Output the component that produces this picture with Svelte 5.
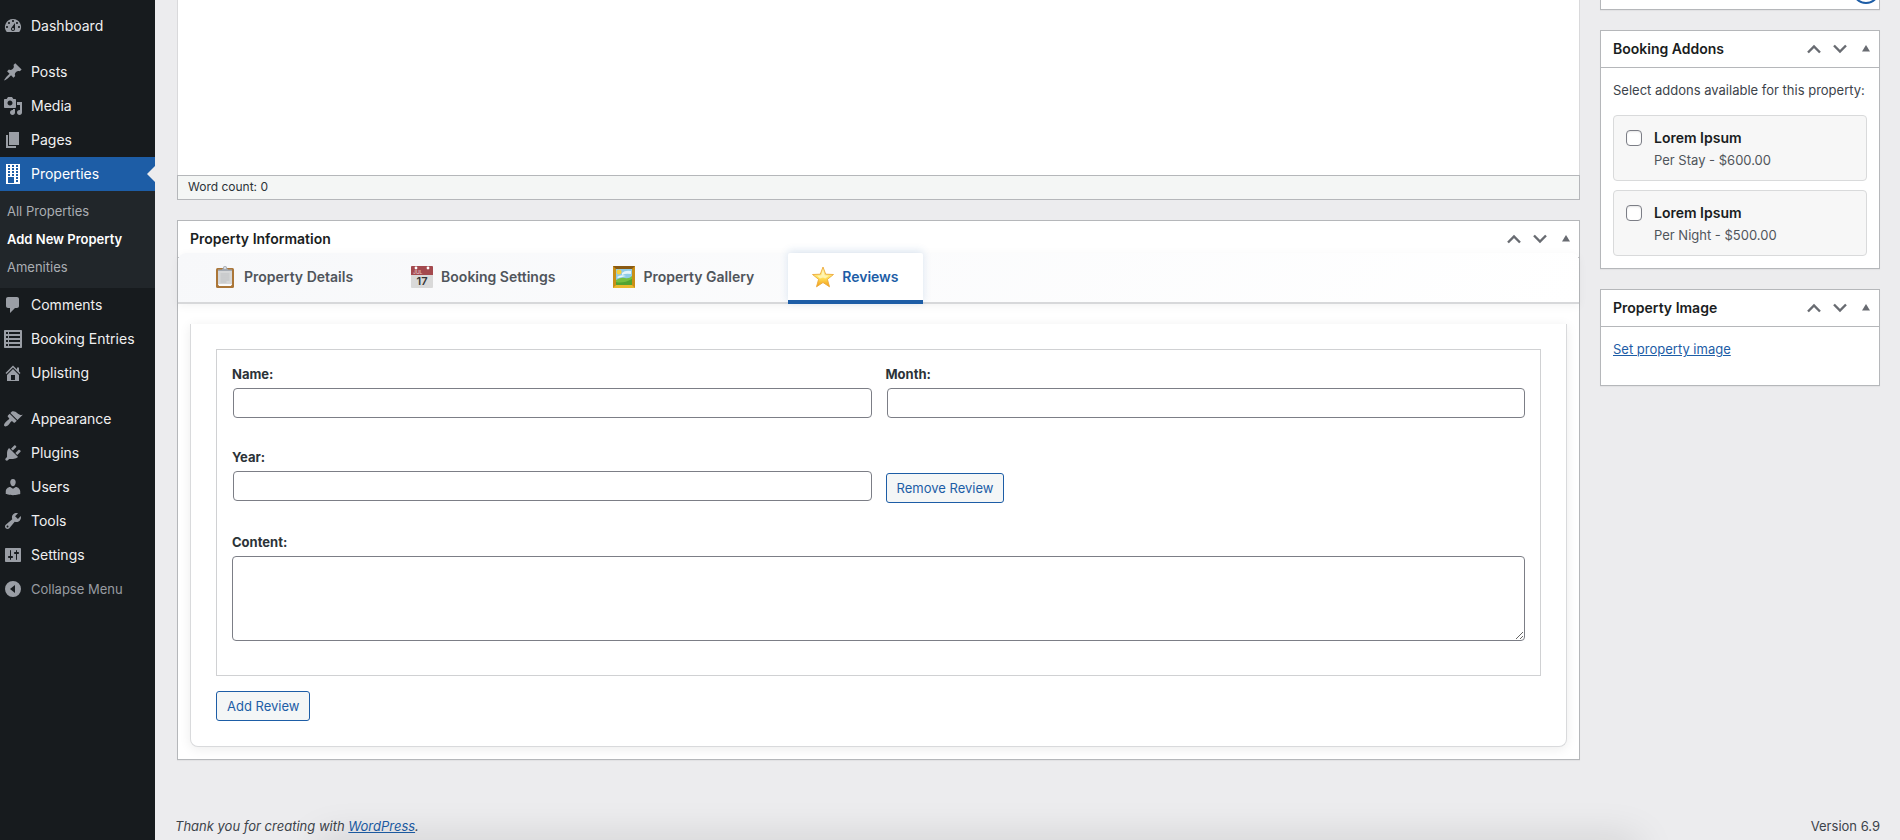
<script>
    const icons = {
        dashboard: 'M3.76 16h12.48A7.998 7.998 0 0 0 10 3a7.998 7.998 0 0 0-6.24 13zM10 4c.55 0 1 .45 1 1s-.45 1-1 1-1-.45-1-1 .45-1 1-1zM6 6c.55 0 1 .45 1 1s-.45 1-1 1-1-.45-1-1 .45-1 1-1zm8 0c.55 0 1 .45 1 1s-.45 1-1 1-1-.45-1-1 .45-1 1-1zm-5.37 5.55L12 7v6c0 1.1-.9 2-2 2s-2-.9-2-2c0-.57.24-1.08.63-1.45zM4 10c.55 0 1 .45 1 1s-.45 1-1 1-1-.45-1-1 .45-1 1-1zm12 0c.55 0 1 .45 1 1s-.45 1-1 1-1-.45-1-1 .45-1 1-1zm-5 3c0-.55-.45-1-1-1s-1 .45-1 1 .45 1 1 1 1-.45 1-1z',
        post: 'M10.44 3.02l1.82-1.82 6.36 6.35-1.83 1.82c-1.05-.68-2.48-.57-3.41.36l-.75.75c-.92.93-1.04 2.35-.35 3.41l-1.83 1.82-2.41-2.41-2.8 2.79c-.42.42-3.38 2.71-3.8 2.29s1.86-3.39 2.28-3.81l2.79-2.79L4.1 9.36l1.83-1.82c1.05.69 2.48.57 3.4-.36l.75-.75c.93-.92 1.05-2.35.36-3.41z',
        media: 'M13 11V4c0-.55-.45-1-1-1h-1.67L9 1H5L3.67 3H2c-.55 0-1 .45-1 1v7c0 .55.45 1 1 1h10c.55 0 1-.45 1-1zM7 4.5c1.38 0 2.5 1.12 2.5 2.5S8.38 9.5 7 9.5 4.5 8.38 4.5 7 5.62 4.5 7 4.5zM14 6h5v10.5c0 1.38-1.12 2.5-2.5 2.5S14 17.88 14 16.5s1.12-2.5 2.5-2.5c.17 0 .34.02.5.05V9h-3V6zm-4 8.05V13h2v3.5c0 1.38-1.12 2.5-2.5 2.5S7 17.88 7 16.5 8.12 14 9.5 14c.17 0 .34.02.5.05z',
        page: 'M6 15V2h10v13H6zm-1 1h8v2H3V5h2v11z',
        building: 'M3 20h14V0H3v20zM7 3H5V1h2v2zm4 0H9V1h2v2zm4 0h-2V1h2v2zM7 6H5V4h2v2zm4 0H9V4h2v2zm4 0h-2V4h2v2zM7 9H5V7h2v2zm4 0H9V7h2v2zm4 0h-2V7h2v2zm-8 3H5v-2h2v2zm4 0H9v-2h2v2zm4 0h-2v-2h2v2zm-4 7H5v-6h6v6zm4-4h-2v-2h2v2zm0 3h-2v-2h2v2z',
        comments: 'M5 2h9c1.1 0 2 .9 2 2v7c0 1.1-.9 2-2 2h-2l-5 5v-5H5c-1.1 0-2-.9-2-2V4c0-1.1.9-2 2-2z',
        list: 'M2 1h16c.55 0 1 .45 1 1v16c0 .55-.45 1-1 1H2c-.55 0-1-.45-1-1V2c0-.55.45-1 1-1zM3 3v2h2V3zm3 0v2h11V3zM3 7v2h2V7zm3 0v2h11V7zm-3 4v2h2v-2zm3 0v2h11v-2zm-3 4v2h2v-2zm3 0v2h11v-2z',
        home: 'M16 8.5l1.53 1.53-1.06 1.06L10 4.6l-6.47 6.49-1.06-1.06L10 2.5l4 4v-2h2v4zm-6-2.46l6 5.99V18H4v-5.97zM12 17v-5H8v5h4z',
        appearance: 'M14.48 11.06L7.41 3.99l1.5-1.5c.5-.56 2.3-.47 3.51.32 1.21.8 1.43 1.28 2.91 2.1 1.18.64 2.45 1.26 4.45.85zm-.71.71L6.7 4.7 4.93 6.47c-.39.39-.39 1.02 0 1.41l1.06 1.06c.39.39.39 1.03 0 1.42-.6.6-1.43 1.11-2.21 1.69-.35.26-.7.53-1.01.84C1.43 14.23.4 16.08 1.4 17.07c.99 1 2.84-.03 4.18-1.36.31-.31.58-.66.85-1.02.57-.78 1.08-1.61 1.69-2.21.39-.39 1.02-.39 1.41 0l1.06 1.06c.39.39 1.02.39 1.41 0z',
        plugins: 'M13.11 4.36L9.87 7.6 8 5.73l3.24-3.24c.35-.34 1.05-.2 1.56.32.52.51.66 1.21.31 1.55zm-8 1.77l.91-1.12 9.01 9.01-1.19.84c-.71.71-2.63 1.16-3.82 1.16H6.14L4.9 17.26c-.59.59-1.54.59-2.12 0-.59-.58-.59-1.53 0-2.12l1.24-1.24v-3.88c0-1.13.4-3.19 1.09-3.89zm7.26 3.97l3.24-3.24c.34-.35 1.04-.21 1.55.31.52.51.66 1.21.31 1.55l-3.24 3.25z',
        users: 'M10 9.25c-2.27 0-2.73-3.44-2.73-3.44C7 4.02 7.82 2 9.97 2c2.16 0 2.98 2.02 2.71 3.81 0 0-.41 3.44-2.68 3.44zm0 2.57L12.72 10c2.39 0 4.52 2.33 4.52 4.53v2.49s-3.65 1.13-7.24 1.13c-3.65 0-7.24-1.13-7.24-1.13v-2.49c0-2.25 1.94-4.48 4.47-4.48z',
        tools: 'M16.68 9.77c-1.34 1.34-3.3 1.67-4.95.99l-5.41 6.52c-.99.99-2.59.99-3.58 0s-.99-2.59 0-3.57l6.52-5.42c-.68-1.65-.35-3.61.99-4.95 1.28-1.28 3.12-1.62 4.72-1.06l-2.89 2.89 2.82 2.82 2.86-2.87c.53 1.58.18 3.39-1.08 4.65zM3.81 16.21c.4.39 1.04.39 1.43 0 .4-.4.4-1.04 0-1.43-.39-.4-1.03-.4-1.43 0-.39.39-.39 1.03 0 1.43z',
        settings: 'M18 16V4c0-.55-.45-1-1-1H3c-.55 0-1 .45-1 1v12c0 .55.45 1 1 1h14c.55 0 1-.45 1-1zM8 11h1c.55 0 1 .45 1 1s-.45 1-1 1H8v1.5c0 .28-.22.5-.5.5s-.5-.22-.5-.5V13H6c-.55 0-1-.45-1-1s.45-1 1-1h1V5.5c0-.28.22-.5.5-.5s.5.22.5.5V11zm5-2h-1c-.55 0-1-.45-1-1s.45-1 1-1h1V5.5c0-.28.22-.5.5-.5s.5.22.5.5V7h1c.55 0 1 .45 1 1s-.45 1-1 1h-1v5.5c0 .28-.22.5-.5.5s-.5-.22-.5-.5V9z',
        collapse: 'M10 2a8 8 0 1 0 0 16 8 8 0 0 0 0-16zm2 4v8l-5-4z'
    };

    const menu = [
        [{ label: 'Dashboard', icon: 'dashboard' }],
        [
            { label: 'Posts', icon: 'post' },
            { label: 'Media', icon: 'media' },
            { label: 'Pages', icon: 'page' },
            { label: 'Properties', icon: 'building', children: ['All Properties', 'Add New Property', 'Amenities'] },
            { label: 'Comments', icon: 'comments' },
            { label: 'Booking Entries', icon: 'list' },
            { label: 'Uplisting', icon: 'home' }
        ],
        [
            { label: 'Appearance', icon: 'appearance' },
            { label: 'Plugins', icon: 'plugins' },
            { label: 'Users', icon: 'users' },
            { label: 'Tools', icon: 'tools' },
            { label: 'Settings', icon: 'settings' }
        ]
    ];

    const tabs = ['Property Details', 'Booking Settings', 'Property Gallery', 'Reviews'];
    let activeTab = $state('Reviews');

    let addons = $state([
        { name: 'Lorem Ipsum', price: 'Per Stay - $600.00', checked: false },
        { name: 'Lorem Ipsum', price: 'Per Night - $500.00', checked: false }
    ]);

    let nextId = 1;
    let reviews = $state([{ id: 0, name: '', month: '', year: '', content: '' }]);

    const addReview = () => {
        reviews.push({ id: nextId++, name: '', month: '', year: '', content: '' });
    };

    const removeReview = (id) => {
        reviews = reviews.filter((r) => r.id !== id);
    };
</script>

{#snippet icon(name)}
    <svg class="icon" viewBox="0 0 20 20" aria-hidden="true">
        <path fill-rule="evenodd" d={icons[name]} />
    </svg>
{/snippet}

{#snippet boxHeader(title)}
    <header class="box-header">
        <h2>{title}</h2>
        <div class="handles">
            <button type="button" aria-label="Move {title} up">
                <svg viewBox="0 0 20 20"><path class="chevron" d="M4 13.5l6-6 6 6" /></svg>
            </button>
            <button type="button" aria-label="Move {title} down">
                <svg viewBox="0 0 20 20"><path class="chevron" d="M4 6.5l6 6 6-6" /></svg>
            </button>
            <button type="button" aria-label="Toggle panel: {title}">
                <svg viewBox="0 0 20 20"><path d="M6 12.5l4-6.5 4 6.5z" /></svg>
            </button>
        </div>
    </header>
{/snippet}

{#snippet tabIcon(name)}
    <svg class="tab-icon" viewBox="0 0 22 22" aria-hidden="true">
        {#if name === 'Property Details'}
            <rect x="2" y="2" width="18" height="20" rx="1.5" fill="#ab7638" />
            <rect x="4" y="4" width="14" height="15" fill="#d6d7d8" />
            <path d="M4 18h14l-1 2H5z" fill="#fafafa" />
            <path d="M6.5 8h9M6.5 10h9M6.5 12h9M6.5 14h9M6.5 16h6" stroke="#bfc1c3" stroke-width="1" />
            <path d="M4 5V3.500h4L9 2a2 2 0 0 1 4 0l1 1.500h4V5z" fill="#a3a9b1" />
            <circle cx="11" cy="2" r="1" fill="#e9ebee" />
        {:else if name === 'Booking Settings'}
            <rect x="0" y="0" width="22" height="22" rx="1" fill="#d9d9d9" />
            <path d="M1 0h20a1 1 0 0 1 1 1v8H0V1a1 1 0 0 1 1-1z" fill="#a4494e" />
            <circle cx="5" cy="2" r="1.400" fill="#fff" />
            <circle cx="17" cy="2" r="1.400" fill="#fff" />
            <text x="2" y="8" font-size="5" fill="#dfb5b7">JUL</text>
            <text x="11" y="19" font-size="11" font-weight="600" text-anchor="middle" fill="#353535">17</text>
        {:else if name === 'Property Gallery'}
            <rect x="0" y="0" width="22" height="22" fill="#c98f16" />
            <path d="M0 0h22l-3 3H3z" fill="#8a5a12" />
            <path d="M0 22h22l-3-3H3z" fill="#e9b92e" />
            <rect x="3" y="3" width="16" height="16" fill="#8ecbe8" />
            <path d="M9 7q3-3 9-2v3q-5-1-9 1zM4 11q4-3 9-1l-8 2z" fill="#e5f4fa" />
            <circle cx="6" cy="6" r="2.500" fill="#f5cf3c" />
            <path d="M3 14q5-3 9-2t7-2v9H3z" fill="#75bf42" />
            <path d="M3 16q7 2 16-3v6H3z" fill="#52a332" />
        {:else}
            <defs>
                <linearGradient id="star-fill" x1="0" y1="0" x2="0" y2="1">
                    <stop offset="0" stop-color="#fff3a6" />
                    <stop offset=".55" stop-color="#ffe15a" />
                    <stop offset="1" stop-color="#f29a13" />
                </linearGradient>
            </defs>
            <path d="M11 1l2.700 7.200 7.800.3-6.100 4.800 2.100 7.500L11 16.500l-6.500 4.300 2.100-7.500L.5 8.500l7.800-.3z" fill="url(#star-fill)" stroke="#eca83a" stroke-width=".9" stroke-linejoin="round" />
            <path d="M11 4l1.700 5.300 4.300.4-3.800 2.700L11 11.500l-3 1-3-2.800 4.300-.4z" fill="#fff9cf" opacity=".7" />
        {/if}
    </svg>
{/snippet}

<div class="admin">
    <nav class="side-menu" aria-label="Main menu">
        {#each menu as group}
            <ul class="menu-group">
                {#each group as item}
                    <li>
                        <a href="#{item.icon}" class="menu-link" class:current={item.children}>
                            {@render icon(item.icon)}
                            {item.label}
                        </a>
                        {#if item.children}
                            <ul class="submenu">
                                {#each item.children as child}
                                    <li><a href="#{item.icon}" class:active={child === 'Add New Property'}>{child}</a></li>
                                {/each}
                            </ul>
                        {/if}
                    </li>
                {/each}
            </ul>
        {/each}
        <button type="button" class="collapse">
            {@render icon('collapse')}
            Collapse Menu
        </button>
    </nav>

    <div class="content">
        <div class="columns">
            <main>
                <section class="editor">
                    <textarea aria-label="Description"></textarea>
                    <div class="status-bar">Word count: 0</div>
                </section>

                <section class="box info-box">
                    {@render boxHeader('Property Information')}
                    <div class="tabs" role="tablist">
                        {#each tabs as tab}
                            <button
                                type="button"
                                role="tab"
                                class="tab"
                                class:active={activeTab === tab}
                                aria-selected={activeTab === tab}
                                onclick={() => (activeTab = tab)}
                            >
                                {@render tabIcon(tab)}
                                {tab}
                            </button>
                        {/each}
                    </div>

                    <div class="panel">
                        {#each reviews as review (review.id)}
                            <div class="review">
                                <div class="field">
                                    <label for="name-{review.id}">Name:</label>
                                    <input id="name-{review.id}" type="text" bind:value={review.name} />
                                </div>
                                <div class="field">
                                    <label for="month-{review.id}">Month:</label>
                                    <input id="month-{review.id}" type="text" bind:value={review.month} />
                                </div>
                                <div class="field">
                                    <label for="year-{review.id}">Year:</label>
                                    <input id="year-{review.id}" type="text" bind:value={review.year} />
                                </div>
                                <div class="remove">
                                    <button type="button" class="button" onclick={() => removeReview(review.id)}>Remove Review</button>
                                </div>
                                <div class="field wide">
                                    <label for="content-{review.id}">Content:</label>
                                    <textarea id="content-{review.id}" bind:value={review.content}></textarea>
                                </div>
                            </div>
                        {/each}
                        <button type="button" class="button" onclick={addReview}>Add Review</button>
                    </div>
                </section>
            </main>

            <aside>
                <section class="box previous-box">
                    <span class="ring"></span>
                </section>

                <section class="box">
                    {@render boxHeader('Booking Addons')}
                    <div class="box-body addons">
                        <p>Select addons available for this property:</p>
                        {#each addons as addon}
                            <label class="addon">
                                <input type="checkbox" bind:checked={addon.checked} />
                                <span>
                                    <strong>{addon.name}</strong>
                                    <small>{addon.price}</small>
                                </span>
                            </label>
                        {/each}
                    </div>
                </section>

                <section class="box">
                    {@render boxHeader('Property Image')}
                    <div class="box-body image-body">
                        <a href="#image">Set property image</a>
                    </div>
                </section>
            </aside>
        </div>

        <footer>
            <em>Thank you for creating with <a href="#wordpress">WordPress</a>.</em>
            <span>Version 6.9</span>
        </footer>
    </div>
</div>

<style>
    :global(body) {
        background: #ececee;
        color: #3c434a;
        font-family: Inter, "Liberation Sans", sans-serif;
        font-size: 13px;
        line-height: 20px;
    }

    * {
        box-sizing: border-box;
    }

    ul, h2, p {
        margin: 0;
        padding: 0;
        list-style: none;
    }

    button, input, textarea {
        font: inherit;
        margin: 0;
    }

    a {
        color: #1d5da6;
    }

    .admin {
        display: flex;
        min-height: 100vh;
        position: relative;
        overflow: hidden;
    }

    /* soft shade along the bottom edge */
    .admin::after {
        content: "";
        position: absolute;
        left: 17%;
        right: 14%;
        top: 100%;
        height: 20px;
        box-shadow: 0 4px 40px 4px rgba(0, 0, 0, 0.14);
        pointer-events: none;
    }

    /* Sidebar */
    .side-menu {
        flex: 0 0 155px;
        padding-top: 9px;
        background: #171b1e;
        font-size: 14px;
    }

    .menu-group + .menu-group {
        margin-top: 12px;
    }

    .menu-link, .collapse {
        display: flex;
        align-items: center;
        gap: 8px;
        width: 100%;
        height: 34px;
        padding: 0 0 0 3px;
        color: #f0f0f1;
        text-decoration: none;
    }

    .icon {
        width: 20px;
        height: 20px;
        fill: #9a9ea5;
    }

    .menu-link.current {
        position: relative;
        background: #1d5da6;
        color: #fff;
    }

    .menu-link.current .icon {
        fill: #fff;
    }

    .menu-link.current::after {
        content: "";
        position: absolute;
        right: 0;
        top: 9px;
        border: 8px solid transparent;
        border-left-width: 0;
        border-right-color: #ececee;
    }

    .submenu {
        padding: 6px 0 7px;
        background: #21262a;
        font-size: 13px;
    }

    .submenu a {
        display: block;
        padding: 4px 7px;
        color: #aaaeb3;
        text-decoration: none;
    }

    .submenu a.active {
        color: #fff;
        font-weight: 600;
    }

    .collapse {
        border: 0;
        background: none;
        color: #989ca1;
        font-size: 13px;
        text-align: left;
    }

    /* Content */
    .content {
        flex: 1;
        min-width: 0;
        padding: 0 20px;
    }

    .columns {
        display: grid;
        grid-template-columns: minmax(0, 1fr) 280px;
        gap: 20px;
        padding-left: 2px;
    }

    .editor textarea {
        display: block;
        width: 100%;
        height: 175px;
        border: 1px solid #d9d9db;
        border-width: 0 1px;
        background: #fff;
        resize: none;
    }

    .status-bar {
        height: 25px;
        padding: 1px 10px;
        border: 1px solid #b5b7ba;
        background: #f4f6f5;
        color: #2c3338;
        font-size: 12px;
    }

    .box {
        border: 1px solid #b5b7ba;
        background: #fff;
        box-shadow: 0 1px 1px rgba(0, 0, 0, 0.04);
    }

    .info-box {
        margin-top: 20px;
        padding-bottom: 12px;
    }

    .box-header {
        display: flex;
        align-items: center;
        justify-content: space-between;
        height: 37px;
        padding-left: 12px;
        border-bottom: 1px solid #b5b7ba;
    }

    h2 {
        color: #1a1d21;
        font-size: 14px;
        font-weight: 600;
    }

    .handles {
        display: flex;
    }

    .handles button {
        display: flex;
        justify-content: center;
        width: 26px;
        padding: 0;
        border: 0;
        background: none;
    }

    .handles svg {
        width: 20px;
        height: 20px;
        fill: #686b71;
    }

    .handles .chevron {
        fill: none;
        stroke: #686b71;
        stroke-width: 2.4;
    }

    .tabs {
        display: flex;
        gap: 10px;
        margin-top: -5px;
        padding-left: 12px;
        border-bottom: 2px solid #d7d8da;
        border-radius: 8px 8px 0 0;
        background: linear-gradient(135deg, #f7f8fa, #fff);
        box-shadow: 0 2px 10px rgba(0, 0, 0, 0.05);
    }

    .tab {
        display: flex;
        align-items: center;
        gap: 8px;
        height: 51px;
        margin-bottom: -2px;
        padding: 0 24px;
        border: 0;
        border-bottom: 4px solid transparent;
        background: none;
        color: #50555b;
        font-size: 14px;
        font-weight: 600;
    }

    .tab.active {
        border-bottom-color: #1d5da6;
        border-radius: 2px 2px 0 0;
        background: #fff;
        color: #1d5da6;
        box-shadow: 0 -2px 8px rgba(29, 93, 166, 0.15);
    }

    .tab-icon {
        width: 22px;
        height: 22px;
    }

    .panel {
        margin: 20px 12px 0;
        padding: 25px;
        border: 1px solid #d9dadc;
        border-top: 0;
        border-radius: 0 0 8px 8px;
        background: #fff;
        box-shadow: 0 2px 12px rgba(0, 0, 0, 0.08);
    }

    .review {
        display: grid;
        grid-template-columns: 1fr 1fr;
        gap: 30px 14px;
        margin-bottom: 15px;
        padding: 15px 15px 34px;
        border: 1px solid #d0d1d3;
    }

    .field {
        display: flex;
        flex-direction: column;
        gap: 5px;
    }

    .field label {
        color: #2c3338;
        font-weight: 700;
        line-height: 18px;
    }

    .field input, .field textarea {
        border: 1px solid #7c7e86;
        border-radius: 4px;
        background: #fff;
        padding: 0 8px;
    }

    .field input {
        height: 30px;
        margin-left: 1px;
    }

    .field textarea {
        height: 85px;
        resize: vertical;
    }

    .wide {
        grid-column: 1 / -1;
    }

    .remove {
        padding-top: 25px;
    }

    .button {
        display: block;
        height: 30px;
        padding: 0 10px;
        border: 1px solid #1d5da6;
        border-radius: 3px;
        background: #f4f6f6;
        color: #1d5da6;
    }

    /* Right column */
    aside {
        display: flex;
        flex-direction: column;
        gap: 20px;
    }

    .previous-box {
        position: relative;
        height: 10px;
        border-top: 0;
    }

    .ring {
        position: absolute;
        right: -1px;
        bottom: 5px;
        width: 28px;
        height: 28px;
        border: 2px solid #1d5da6;
        border-radius: 50%;
    }

    .box-body {
        padding: 12px;
    }

    .addons {
        display: flex;
        flex-direction: column;
        gap: 9px;
    }

    .addons p {
        margin-bottom: 6px;
        color: #3c434a;
        white-space: nowrap;
    }

    .addon {
        display: flex;
        gap: 12px;
        padding: 12px 12px 10px;
        border: 1px solid #d9dadb;
        border-radius: 4px;
        background: #f7f7f7;
    }

    .addon input {
        appearance: none;
        width: 16px;
        height: 16px;
        margin-top: 2px;
        border: 1px solid #7c7e86;
        border-radius: 4px;
        background: #fff;
        box-shadow: inset 0 1px 2px rgba(0, 0, 0, 0.1);
    }

    .addon input:checked {
        background: #1d5da6;
    }

    .addon strong, .addon small {
        display: block;
    }

    .addon strong {
        color: #1a1d21;
        font-size: 14px;
        font-weight: 600;
    }

    .addon small {
        margin-top: 2px;
        color: #50555b;
        font-size: 13px;
    }

    .image-body {
        padding-bottom: 26px;
    }

    footer {
        display: flex;
        justify-content: space-between;
        margin-top: 56px;
        padding-bottom: 4px;
    }
</style>
